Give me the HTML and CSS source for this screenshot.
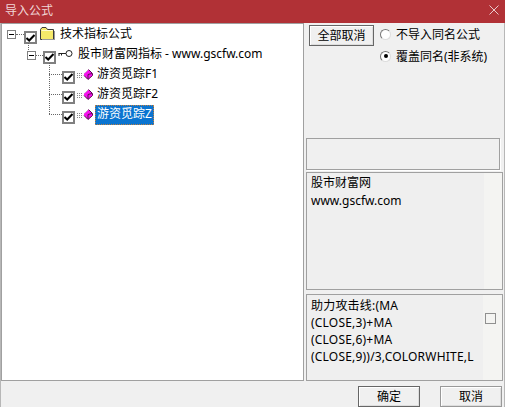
FILE: index.html
```html
<!DOCTYPE html>
<html lang="zh-CN">
<head>
<meta charset="utf-8">
<title>导入公式</title>
<link rel="stylesheet" href="styles.css">
</head>
<body>
<div class="dialog">
  <header class="titlebar">
    <span class="title">导入公式</span>
    <svg class="close" width="10" height="10" viewBox="0 0 10 10"><path d="M0.5 0.5L9.5 9.5M9.5 0.5L0.5 9.5" stroke="#e9c9ca" fill="none"/></svg>
  </header>
  <main class="content">
    <section class="tree">
      <div class="row level0">
        <span class="expander"></span><span class="dots short"></span>
        <span class="check"><svg width="9" height="8" viewBox="0 0 9 8"><path d="M0.5 4L3.2 6.5L8.5 1" stroke="#000" stroke-width="2" fill="none"/></svg></span>
        <svg class="icon folder" width="16" height="13" viewBox="0 0 16 13"><path d="M1.5 12.5V2.5L3 0.5H7L8.5 2.5H14.5V12.5Z" fill="#f5e96a" stroke="#3a3a3a"/><path d="M2.5 3.5H13.5" stroke="#fffbd0"/><path d="M15.5 4V13M3 12.5H15" stroke="#999" fill="none"/></svg>
        <span class="label">技术指标公式</span>
      </div>
      <div class="row level1">
        <span class="expander"></span><span class="dots short1"></span>
        <span class="check"><svg width="9" height="8" viewBox="0 0 9 8"><path d="M0.5 4L3.2 6.5L8.5 1" stroke="#000" stroke-width="2" fill="none"/></svg></span>
        <svg class="icon key" width="15" height="7" viewBox="0 0 15 7"><circle cx="11" cy="3.5" r="3" fill="#fff" stroke="#222"/><path d="M0.5 3.5H8M1 3.5V6M3.5 3.5V5.5" stroke="#222" fill="none"/></svg>
        <span class="label">股市财富网指标 - www.gscfw.com</span>
      </div>
      <div class="children">
        <div class="row leaf">
          <span class="dots long"></span>
          <span class="check"><svg width="9" height="8" viewBox="0 0 9 8"><path d="M0.5 4L3.2 6.5L8.5 1" stroke="#000" stroke-width="2" fill="none"/></svg></span>
          <svg class="icon gem" width="16" height="11" viewBox="0 0 16 11"><path d="M0 4.500H6M0 6.500H6M0 8.500H6" stroke="#888" stroke-dasharray="1 1"/><path d="M11.500 0.500L15.500 4.500V6.500L11 10.500L7 6.500V4.500Z" fill="#fa10f0"/><path d="M11.500 0.500L15.500 4.500V6.500L11 10.500M11 10.500L7 6.500M11 5.500L15 4.500M11 5.500V10" stroke="#5a1050" fill="none"/><path d="M7.500 4.500L11 1" stroke="#c9a0c5" fill="none"/></svg>
          <span class="label">游资觅踪F1</span>
        </div>
        <div class="row leaf">
          <span class="dots long"></span>
          <span class="check"><svg width="9" height="8" viewBox="0 0 9 8"><path d="M0.5 4L3.2 6.5L8.5 1" stroke="#000" stroke-width="2" fill="none"/></svg></span>
          <svg class="icon gem" width="16" height="11" viewBox="0 0 16 11"><path d="M0 4.500H6M0 6.500H6M0 8.500H6" stroke="#888" stroke-dasharray="1 1"/><path d="M11.500 0.500L15.500 4.500V6.500L11 10.500L7 6.500V4.500Z" fill="#fa10f0"/><path d="M11.500 0.500L15.500 4.500V6.500L11 10.500M11 10.500L7 6.500M11 5.500L15 4.500M11 5.500V10" stroke="#5a1050" fill="none"/><path d="M7.500 4.500L11 1" stroke="#c9a0c5" fill="none"/></svg>
          <span class="label">游资觅踪F2</span>
        </div>
        <div class="row leaf">
          <span class="dots long"></span>
          <span class="check"><svg width="9" height="8" viewBox="0 0 9 8"><path d="M0.5 4L3.2 6.5L8.5 1" stroke="#000" stroke-width="2" fill="none"/></svg></span>
          <svg class="icon gem" width="16" height="11" viewBox="0 0 16 11"><path d="M0 4.500H6M0 6.500H6M0 8.500H6" stroke="#888" stroke-dasharray="1 1"/><path d="M11.500 0.500L15.500 4.500V6.500L11 10.500L7 6.500V4.500Z" fill="#fa10f0"/><path d="M11.500 0.500L15.500 4.500V6.500L11 10.500M11 10.500L7 6.500M11 5.500L15 4.500M11 5.500V10" stroke="#5a1050" fill="none"/><path d="M7.500 4.500L11 1" stroke="#c9a0c5" fill="none"/></svg>
          <span class="label selected">游资觅踪Z</span>
        </div>
      </div>
    </section>
    <aside class="side">
      <div class="options">
        <button class="btn all" type="button">全部取消</button>
        <div class="radios">
          <div class="radio-row"><span class="radio"></span><span>不导入同名公式</span></div>
          <div class="radio-row"><span class="radio on"></span><span>覆盖同名(非系统)</span></div>
        </div>
      </div>
      <div class="panel empty"></div>
      <div class="panel desc">股市财富网<br>www.gscfw.com</div>
      <div class="panel code">
        <div class="code-text">助力攻击线:(MA<br>(CLOSE,3)+MA<br>(CLOSE,6)+MA<br>(CLOSE,9))/3,COLORWHITE,L</div>
        <span class="scroll-box"></span>
      </div>
    </aside>
  </main>
  <footer class="footer">
    <button class="btn ok" type="button">确定</button>
    <button class="btn cancel" type="button">取消</button>
  </footer>
</div>
</body>
</html>
```
FILE: styles.css
```css
* { box-sizing: border-box; }
html, body { margin: 0; padding: 0; }
body {
  width: 505px;
  height: 407px;
  overflow: hidden;
  background: #f0f0f0;
  color: #000;
  font: 12px/17px "Noto Sans", "Noto Sans CJK SC", "Liberation Sans", sans-serif;
}
.dialog { width: 505px; height: 407px; display: flex; flex-direction: column; border-left: 1px solid #b7b7b7; border-right: 1px solid #b7b7b7; }
.titlebar {
  height: 23px; flex: none; margin: 0 -1px;
  background: #b13136; color: #f0d6d7;
  display: flex; align-items: center; justify-content: space-between;
  padding: 0 6px 2px 5px;
}
.title { line-height: 18px; }
.close { margin-bottom: 2px; }
.content { flex: none; height: 358px; display: flex; gap: 2px; }
.tree {
  width: 303px; height: 358px; flex: none;
  background: #fff; border: 1px solid #a0a0a0;
  padding-top: 1px;
}
.row { height: 20px; display: flex; align-items: center; position: relative; }
.level0 { padding-left: 5px; height: 21px; }
.level1 { padding-left: 25px; }
.level1::before { content: ""; position: absolute; left: 26px; top: -3px; height: 7px; border-left: 1px dotted #666; }
.children { display: flex; flex-direction: column; position: relative; }
.children::before { content: ""; position: absolute; left: 47px; top: -3px; height: 51px; border-left: 1px dotted #666; }
.leaf { padding-left: 47px; }
.expander {
  width: 9px; height: 9px; flex: none; border: 1px solid #808080; position: relative; background: #fff;
  margin-bottom: 2px;
}
.expander::after { content: ""; position: absolute; left: 1px; right: 1px; top: 3px; height: 1px; background: #000; }
.dots { flex: none; border-top: 1px dotted #666; margin-bottom: 2px; }
.dots.short { width: 8px; }
.dots.short1 { width: 7px; }
.dots.long { width: 13px; margin-bottom: 4px; }
.check {
  width: 13px; height: 13px; flex: none; border: 2px solid #808080; background: #fff;
  display: flex; align-items: center; justify-content: center;
  margin-top: 2px;
}
.level0 .check { margin-top: 4px; }
.icon { flex: none; margin-left: 2px; }
.folder { margin-bottom: 5px; }
.key { margin-bottom: 6px; margin-left: 2px; }
.gem { margin-bottom: 3px; }
.label { margin-left: 5px; white-space: nowrap; line-height: 17px; margin-bottom: 5px; }
.level1 .label { margin-left: 5px; margin-bottom: 6px; }
.leaf .label { margin-left: 2px; padding: 0 2px; }
.selected { background: #0a74d0; color: #fff; outline: 1px dotted #c08040; outline-offset: -1px; height: 20px; line-height: 18px; margin-bottom: 2px; }
.side { width: 197px; flex: none; display: flex; flex-direction: column; }
.options { height: 115px; display: flex; align-items: flex-start; padding-top: 2px; gap: 6px; padding-left: 3px; }
.btn {
  font: inherit; color: #000; background: #f0f0f0; border: 1px solid #666; padding: 0; border-radius: 0;
  box-shadow: inset 1px 1px 0 #fff, inset -1px -1px 0 #ddd;
}
.all { width: 65px; height: 21px; flex: none; }
.radios { display: flex; flex-direction: column; gap: 4px; }
.radio-row { display: flex; align-items: center; gap: 5px; height: 18px; }
.radio {
  width: 11px; height: 11px; flex: none; border-radius: 50%; background: #fff; position: relative;
  border: 1px solid; border-color: #777 #ddd #ddd #777;
}
.radio.on::after { content: ""; position: absolute; left: 2.5px; top: 2.500px; width: 4px; height: 4px; border-radius: 50%; background: #000; }
.panel { border: 1px solid #a0a0a0; }
.empty { height: 32px; margin-bottom: 2px; margin-right: 3px; box-shadow: 1px 1px 0 #fff; }
.desc { height: 118px; margin-bottom: 4px; padding: 1px 4px; line-height: 18px; background: linear-gradient(90deg, #efefef 177px, #f4f4f2 177px); }
.code { height: 87px; display: flex; align-items: flex-start; justify-content: space-between; padding: 2px 4px; line-height: 17px; background: linear-gradient(90deg, #efefef 176px, #f4f4f2 176px); }
.code-text { white-space: nowrap; letter-spacing: 0.2px; }
.scroll-box { width: 11px; height: 11px; flex: none; border: 1px solid #909090; margin: 16px 2px 0 0; }
.footer { flex: 1; display: flex; justify-content: flex-end; align-items: flex-start; gap: 20px; padding: 5px 2px 0 0; }
.ok, .cancel { width: 62px; height: 21px; }
.cancel { border-color: #999; }
```
